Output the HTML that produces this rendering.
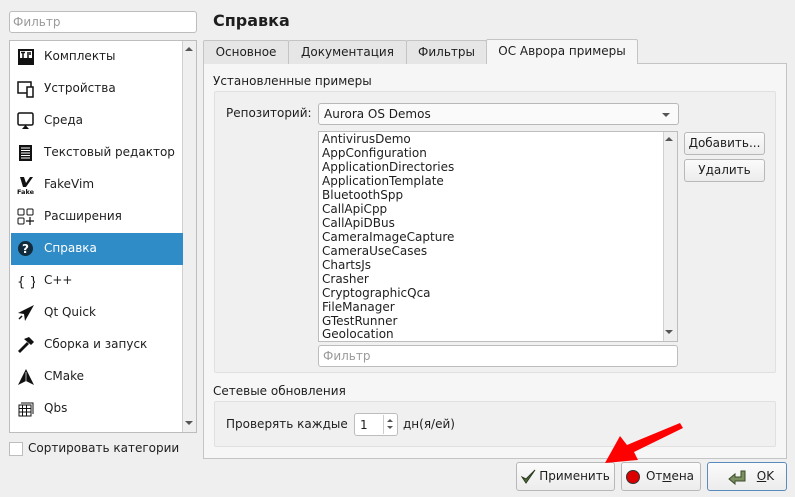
<!DOCTYPE html>
<html><head><meta charset="utf-8">
<style>
*{box-sizing:border-box;margin:0;padding:0}
body{width:795px;height:497px;background:#efefef;font-family:"DejaVu Sans","Liberation Sans",sans-serif;font-size:12px;color:#1e1e1e;position:relative;overflow:hidden}
.a{position:absolute}
.inp{background:#fff;border:1px solid #bdbdbd;border-radius:3px}
.ph{color:#9a9a9a}
.item{position:absolute;left:1px;width:172px;height:32px;line-height:30px;padding-left:33px}
.item svg{position:absolute;left:6px;top:7px}
.sel{background:#308cc6;color:#fff}
.tab{position:absolute;top:40px;height:24px;border:1px solid #c4c4c4;border-bottom:none;background:#e6e6e6;text-align:center;line-height:22px;border-radius:2px 2px 0 0}
.btn{position:absolute;border:1px solid #b8b8b8;border-radius:3px;background:linear-gradient(#fbfbfb,#ececec);text-align:center}
.grp{position:absolute;border:1px solid #e0e0e0;border-radius:2px;background:#f0f0f0}
.lst div{height:14px;line-height:14px}
</style></head><body>
<div class="a inp" style="left:9px;top:11px;width:188px;height:22px;padding:2px 3px;line-height:16px"><span class="ph">Фильтр</span></div>
<div class="a" style="left:9px;top:40px;width:188px;height:393px;background:#fff;border:1px solid #bdbdbd">
 <div class="a" style="left:172px;top:0;width:14px;height:391px;background:#efefef;border-left:1px solid #d0d0d0"></div>
 <div class="a" style="left:175px;top:6px;width:0;height:0;border:4px solid transparent;border-bottom-color:#555;border-top:none"></div>
 <div class="a" style="left:175px;top:380px;width:0;height:0;border:4px solid transparent;border-top-color:#555;border-bottom:none"></div>
 <div class="item" style="top:0"><svg width="18" height="18"><rect x="1" y="1" width="16" height="16" fill="#111"/><rect x="3" y="3" width="12" height="7" fill="#fff"/><path d="M4 4.5h4M6 4v6M11 4v6M13 4v3" stroke="#111" stroke-width="1.5"/></svg>Комплекты</div>
 <div class="item" style="top:32px"><svg width="18" height="18"><rect x="1" y="2" width="13" height="11" fill="none" stroke="#111" stroke-width="1.5"/><rect x="10" y="7" width="6" height="10" fill="#fff" stroke="#111" stroke-width="1.5"/></svg>Устройства</div>
 <div class="item" style="top:64px"><svg width="18" height="18"><rect x="1" y="1" width="15" height="12" rx="1.5" fill="none" stroke="#111" stroke-width="1.5"/><path d="M5 17h7l-3.5-4z" fill="#111"/></svg>Среда</div>
 <div class="item" style="top:96px"><svg width="18" height="18"><rect x="2" y="1" width="13" height="16" fill="#111"/><path d="M4 4h9M4 6.5h9M4 9h9M4 11.5h9M4 14h9" stroke="#fff"/></svg>Текстовый редактор</div>
 <div class="item" style="top:128px"><svg width="18" height="18"><path d="M3 1h4l2 6 4-6h3l-7 10h-3z" fill="#111"/><text x="0" y="18" font-size="6.5" font-weight="bold" fill="#111">Fake</text></svg>FakeVim</div>
 <div class="item" style="top:160px"><svg width="18" height="18"><rect x="1" y="1" width="6" height="6" rx="1" fill="none" stroke="#111"/><rect x="10" y="1" width="6" height="6" rx="1" fill="none" stroke="#111"/><rect x="1" y="10" width="6" height="6" rx="1" fill="none" stroke="#111"/><path d="M13 9v8M9 13h8" stroke="#111" stroke-width="1.2"/></svg>Расширения</div>
 <div class="item sel" style="top:192px"><svg width="18" height="18"><circle cx="8.5" cy="8.5" r="7.5" fill="#122b3c"/><text x="8.5" y="13" font-size="12" font-weight="bold" fill="#fff" text-anchor="middle">?</text></svg>Справка</div>
 <div class="item" style="top:224px"><svg width="18" height="18"><text x="0" y="14" font-size="13" fill="#111">{ }</text></svg>C++</div>
 <div class="item" style="top:256px"><svg width="18" height="18"><path d="M17 1L1 9l6 1 1 7z" fill="#111"/><path d="M5 12l-3 3" stroke="#111" stroke-width="1.5"/></svg>Qt Quick</div>
 <div class="item" style="top:288px"><svg width="18" height="18"><path d="M2 16l9-9" stroke="#111" stroke-width="2.8"/><path d="M7 3l5-2 5 5-3 3z" fill="#111"/></svg>Сборка и запуск</div>
 <div class="item" style="top:320px"><svg width="18" height="18"><path d="M9 1L1 17l8-4 8 4z" fill="#111"/><path d="M9 4v9" stroke="#fff" stroke-width=".7"/></svg>CMake</div>
 <div class="item" style="top:352px"><svg width="18" height="18"><path d="M2 5h12v11H2zM2 8.5h12M2 12h12M5.5 5v11M9.5 5v11M4 3h12v11" fill="none" stroke="#111"/></svg>Qbs</div>
</div>
<div class="a" style="left:9px;top:442px;width:14px;height:14px;background:#fff;border:1px solid #bdbdbd"></div>
<div class="a" style="left:28px;top:441px">Сортировать категории</div>

<div class="a" style="left:213px;top:11px;font-size:16px;font-weight:bold">Справка</div>
<div class="a" style="left:203px;top:63px;width:584px;height:396px;border:1px solid #c4c4c4;background:#f6f6f6"></div>
<div class="tab" style="left:203px;width:86px">Основное</div>
<div class="tab" style="left:288px;width:119px">Документация</div>
<div class="tab" style="left:406px;width:81px">Фильтры</div>
<div class="tab" style="left:486px;width:152px;top:39px;height:25px;background:#f6f6f6;line-height:22px">ОС Аврора примеры</div>

<div class="a" style="left:213px;top:74px">Установленные примеры</div>
<div class="grp" style="left:214px;top:91px;width:562px;height:282px"></div>
<div class="a" style="left:226px;top:106px">Репозиторий:</div>
<div class="btn" style="left:318px;top:103px;width:361px;height:22px;text-align:left;padding-left:5px;line-height:20px;background:#fafafa">Aurora OS Demos
 <div class="a" style="right:8px;top:9px;border:4px solid transparent;border-top-color:#555;border-bottom:none"></div></div>
<div class="a" style="left:318px;top:131px;width:360px;height:211px;background:#fff;border:1px solid #bdbdbd;overflow:hidden">
 <div class="lst" style="position:absolute;left:3px;top:0">
 <div>AntivirusDemo</div><div>AppConfiguration</div><div>ApplicationDirectories</div><div>ApplicationTemplate</div><div>BluetoothSpp</div><div>CallApiCpp</div><div>CallApiDBus</div><div>CameraImageCapture</div><div>CameraUseCases</div><div>ChartsJs</div><div>Crasher</div><div>CryptographicQca</div><div>FileManager</div><div>GTestRunner</div><div style="margin-top:-1px">Geolocation</div></div>
 <div class="a" style="left:344px;top:0;width:14px;height:209px;background:#efefef;border-left:1px solid #d0d0d0"></div>
 <div class="a" style="left:346px;top:5px;border:4px solid transparent;border-bottom-color:#555;border-top:none"></div>
 <div class="a" style="left:346px;top:198px;border:4px solid transparent;border-top-color:#555;border-bottom:none"></div>
</div>
<div class="btn" style="left:684px;top:132px;width:81px;height:23px;line-height:21px">Добавить...</div>
<div class="btn" style="left:684px;top:159px;width:81px;height:23px;line-height:21px">Удалить</div>
<div class="a inp" style="left:318px;top:345px;width:360px;height:22px;padding:2px 4px;line-height:16px"><span class="ph">Фильтр</span></div>

<div class="a" style="left:213px;top:384px">Сетевые обновления</div>
<div class="grp" style="left:214px;top:401px;width:562px;height:46px"></div>
<div class="a" style="left:226px;top:417px">Проверять каждые</div>
<div class="a inp" style="left:354px;top:413px;width:44px;height:23px;padding:3px 5px;line-height:16px">1
 <div class="a" style="left:28px;top:1px;width:1px;height:19px;background:#ccc"></div>
 <div class="a" style="left:32px;top:5px;border:3px solid transparent;border-bottom-color:#555;border-top:none"></div>
 <div class="a" style="left:32px;top:12px;border:3px solid transparent;border-top-color:#555;border-bottom:none"></div></div>
<div class="a" style="left:403px;top:417px">дн(я/ей)</div>

<div class="btn" style="left:516px;top:462px;width:99px;height:29px;line-height:27px;padding-left:18px"><svg class="a" style="left:4px;top:6px" width="16" height="16"><path d="M1 8l4 6 9-13-9 9z" fill="#4f6b3a" stroke="#2b3a20"/></svg>Применить</div>
<div class="btn" style="left:621px;top:462px;width:80px;height:29px;line-height:27px;padding-left:18px"><svg class="a" style="left:4px;top:7px" width="16" height="16"><circle cx="7" cy="7" r="6.5" fill="#d00" stroke="#333"/></svg>От<u>м</u>ена</div>
<div class="btn" style="left:707px;top:462px;width:80px;height:29px;line-height:27px;padding-left:14px;border-color:#5a8bbd"><svg class="a" style="left:20px;top:6px" width="18" height="16"><path d="M1 10l6-5v3h6V2h4v10H7v3z" fill="#7a9060" stroke="#3a4a2a"/></svg>&nbsp;&nbsp;&nbsp;&nbsp;&nbsp;&nbsp;<u>O</u>K</div>

<svg class="a" style="left:0;top:0" width="795" height="497"><path d="M680 423L683 428L634 452L638 460L605 463L620 436L627 445Z" fill="#f00"/></svg>
</body></html>
